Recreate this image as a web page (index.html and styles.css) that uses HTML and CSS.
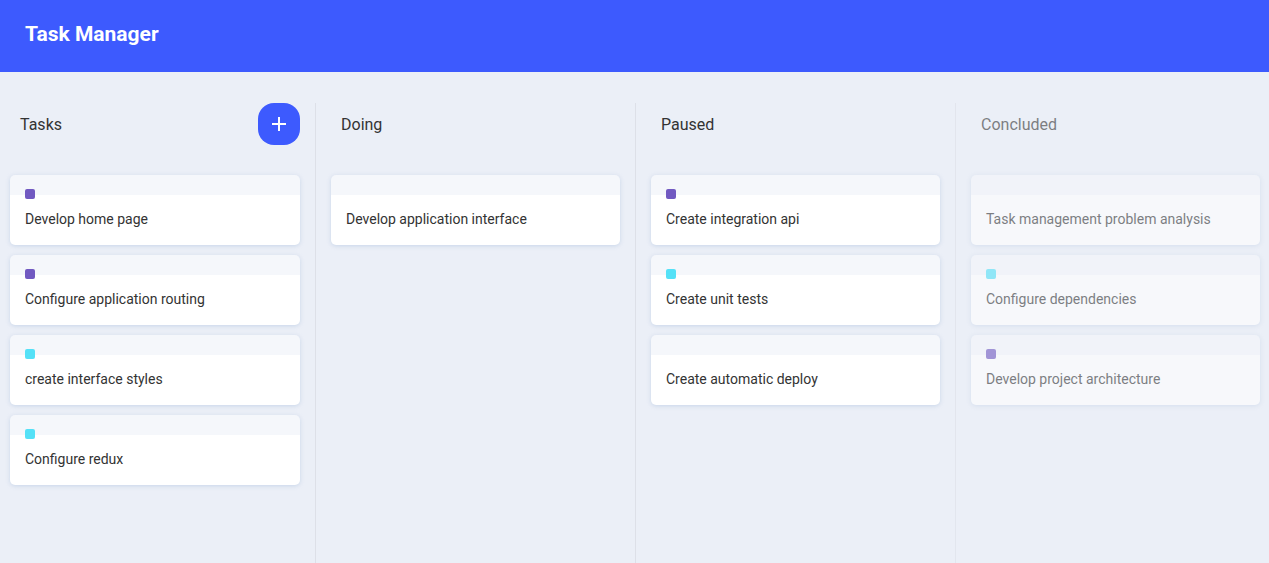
FILE: index.html
```html
<!DOCTYPE html>
<html lang="en">
<head>
<meta charset="utf-8">
<title>Task Manager</title>
<link rel="stylesheet" href="styles.css">
</head>
<body>
<header class="topbar"><h1 class="brand">Task Manager</h1></header>
<main class="board">
  <section class="column">
    <div class="column-head">
      <h2 class="column-title">Tasks</h2>
      <button class="add-btn" type="button" aria-label="Add task">
        <svg width="16" height="16" viewBox="0 0 16 16"><path d="M8 1v14M1 8h14" stroke="#fff" stroke-width="2" fill="none"/></svg>
      </button>
    </div>
    <ul class="cards">
      <li class="card"><span class="label purple"></span><p>Develop home page</p></li>
      <li class="card"><span class="label purple"></span><p>Configure application routing</p></li>
      <li class="card"><span class="label cyan"></span><p>create interface styles</p></li>
      <li class="card"><span class="label cyan"></span><p>Configure redux</p></li>
    </ul>
  </section>
  <section class="column">
    <div class="column-head"><h2 class="column-title">Doing</h2></div>
    <ul class="cards">
      <li class="card"><p>Develop application interface</p></li>
    </ul>
  </section>
  <section class="column">
    <div class="column-head"><h2 class="column-title">Paused</h2></div>
    <ul class="cards">
      <li class="card"><span class="label purple"></span><p>Create integration api</p></li>
      <li class="card"><span class="label cyan"></span><p>Create unit tests</p></li>
      <li class="card"><p>Create automatic deploy</p></li>
    </ul>
  </section>
  <section class="column done">
    <div class="column-head"><h2 class="column-title">Concluded</h2></div>
    <ul class="cards">
      <li class="card"><p>Task management problem analysis</p></li>
      <li class="card"><span class="label cyan"></span><p>Configure dependencies</p></li>
      <li class="card"><span class="label purple"></span><p>Develop project architecture</p></li>
    </ul>
  </section>
</main>
</body>
</html>
```
FILE: styles.css
```css
* { box-sizing: border-box; }
html, body { height: 100%; }
body {
  margin: 0;
  font-family: Roboto, "Liberation Sans", Arial, sans-serif;
  background: #ebeff7;
  color: #333;
  overflow: hidden;
  -webkit-font-smoothing: antialiased;
}
.topbar {
  height: 72px;
  background: #3d5afe;
  display: flex;
  align-items: center;
  padding: 0 25px 4px;
}
.brand {
  margin: 0;
  color: #fff;
  font-size: 21px;
  font-weight: 700;
  letter-spacing: 0;
}
.board {
  display: flex;
  padding: 31px 0 0 10px;
  height: calc(100% - 72px);
}
.column {
  flex: 0 0 320px;
  padding: 0 15px;
  height: 100%;
}
.column:first-child {
  flex-basis: 305px;
  padding-left: 0;
}
.column + .column {
  border-left: 1px solid rgba(0, 0, 0, 0.06);
}
.done { opacity: 0.6; }
.column-head {
  height: 42px;
  display: flex;
  align-items: center;
  justify-content: space-between;
  padding: 0 0 0 10px;
}
.column-title {
  margin: 0;
  font-size: 16px;
  font-weight: 400;
  color: #333;
}
.add-btn {
  width: 42px;
  height: 42px;
  border: 0;
  border-radius: 16px;
  background: #3d5afe;
  display: flex;
  align-items: center;
  justify-content: center;
  padding: 0;
  cursor: pointer;
}
.cards {
  list-style: none;
  margin: 30px 0 0;
  padding: 0;
}
.card {
  position: relative;
  background: #fff;
  border-radius: 5px;
  margin-bottom: 10px;
  padding: 14px 15px 16px;
  border-top: 20px solid rgba(230, 236, 245, 0.4);
  box-shadow: 0 1px 4px 0 rgba(192, 208, 230, 0.8);
}
.card p {
  margin: 0;
  font-size: 14px;
  line-height: 20px;
  color: #333;
}
.label {
  position: absolute;
  top: -6px;
  left: 15px;
  width: 10px;
  height: 10px;
  border-radius: 2px;
}
.purple { background: #7159c1; }
.cyan { background: #54e1f7; }
```
